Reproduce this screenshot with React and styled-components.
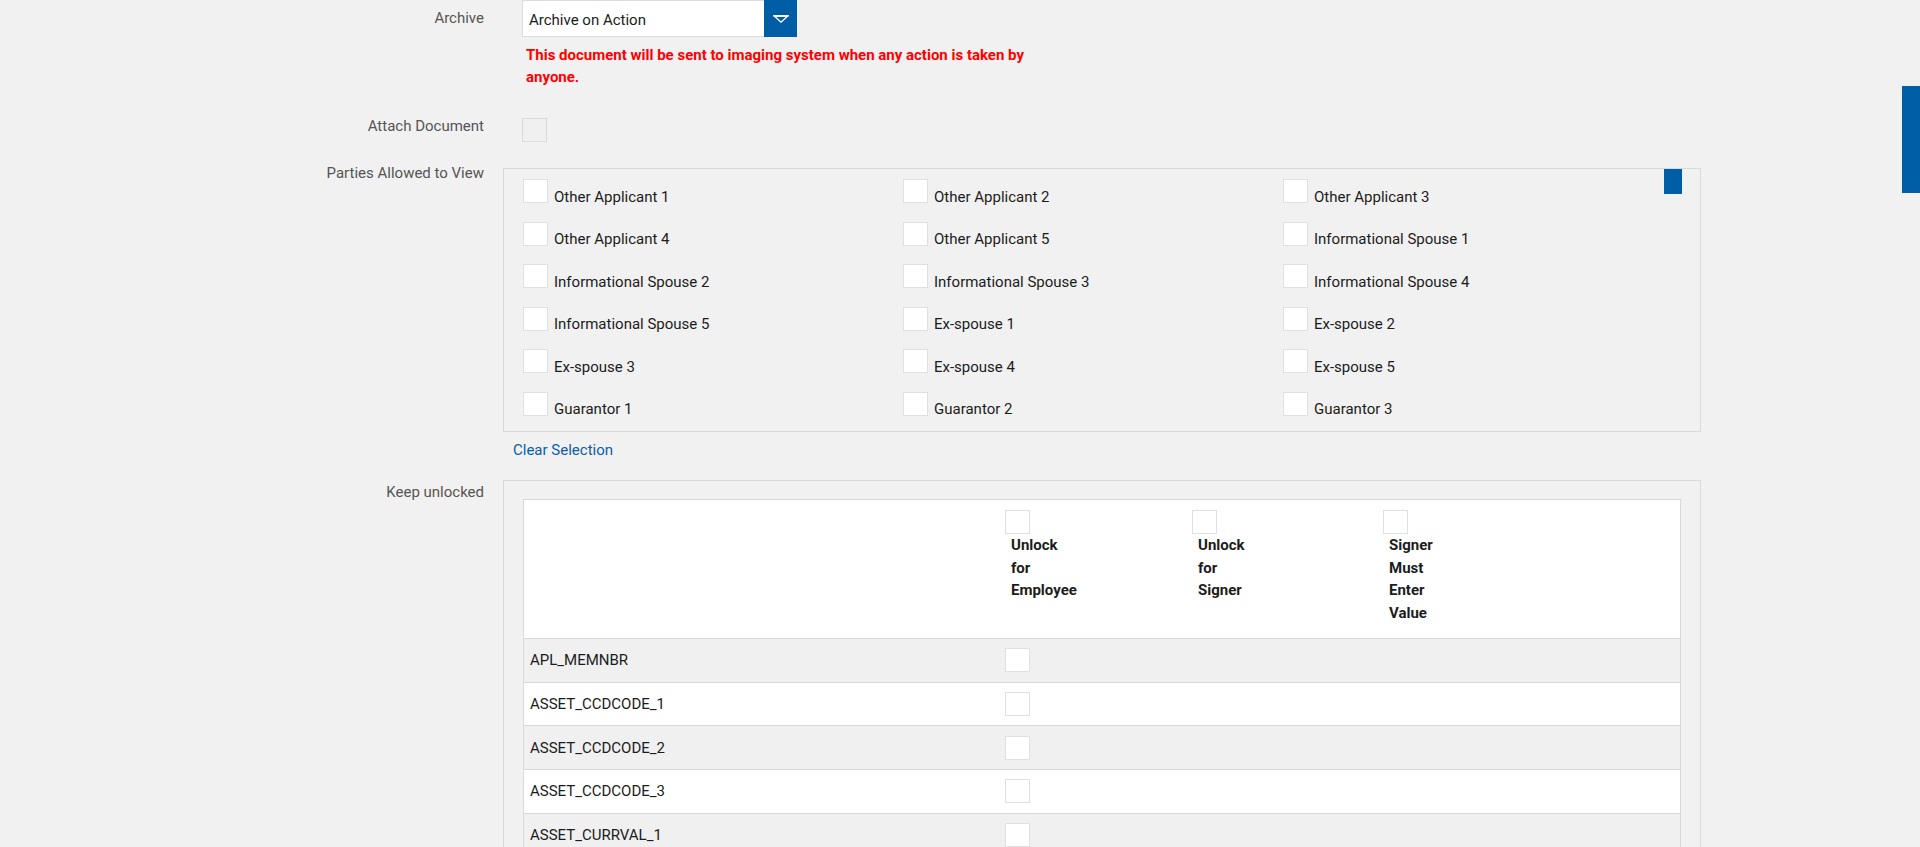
import styled, { createGlobalStyle } from 'styled-components'

const GlobalStyle = createGlobalStyle`
  html, body {
    margin: 0;
    padding: 0;
    overflow: hidden;
    background: #f1f1f1;
  }
  body {
    font-family: Roboto, "Noto Sans", "Liberation Sans", sans-serif;
    color: #222;
  }
  * {
    box-sizing: border-box;
  }
`

const Page = styled.div`
  position: relative;
  height: 847px;
  overflow: hidden;
`

const ScrollThumb = styled.div`
  position: absolute;
  top: ${p => p.$top}px;
  right: ${p => p.$right}px;
  width: 18px;
  height: ${p => p.$height}px;
  background: #005ea6;
`

const Form = styled.div`
  display: flex;
  flex-direction: column;
`

const FormRow = styled.div`
  display: grid;
  grid-template-columns: 484px 1198px;
  column-gap: 19px;
  align-items: start;
  margin-top: ${p => p.$top || 0}px;
`

const Label = styled.label`
  grid-column: 1;
  text-align: right;
  font-size: 15px;
  line-height: 18px;
  color: #555;
  margin-top: ${p => p.$offset || 0}px;
`

const Control = styled.div`
  grid-column: 2;
  display: flex;
  flex-direction: column;
  align-items: flex-start;
`

const Select = styled.div`
  display: flex;
  width: 275px;
  height: 37px;
  margin-left: 19px;
`

const SelectField = styled.div`
  flex: 1;
  background: #fff;
  border: 1px solid #dcdcdc;
  border-right: 0;
  font-size: 15px;
  line-height: 35px;
  padding: 2px 0 0 6px;
  color: #1c1c1c;
`

const ArrowButton = styled.div`
  width: 33px;
  background: #005ea6;
  display: flex;
  align-items: center;
  justify-content: center;
`

const Notice = styled.p`
  margin: 7px 0 0 23px;
  width: 520px;
  color: #ff0000;
  font-weight: 700;
  font-size: 15px;
  line-height: 22px;
`

const Check = styled.span`
  display: block;
  flex: none;
  width: 25px;
  height: 24px;
  background: ${p => (p.$disabled ? '#f0f0f0' : '#fff')};
  border: 1px solid ${p => (p.$disabled ? '#dadada' : '#e0e0e0')};
  margin-left: ${p => p.$left || 0}px;
`

const Box = styled.div`
  position: relative;
  width: 100%;
  border: 1px solid #d9d9d9;
  padding: ${p => p.$pad};
  margin-top: ${p => p.$top || 0}px;
`

const PartyGrid = styled.div`
  display: grid;
  grid-template-columns: repeat(3, 380px);
  grid-auto-rows: 24px;
  row-gap: 18.5px;
`

const Party = styled.div`
  display: flex;
  align-items: flex-start;
  gap: 6px;
`

const PartyName = styled.span`
  font-size: 15px;
  line-height: 18px;
  padding-top: 8.5px;
  white-space: nowrap;
  color: #1c1c1c;
`

const ClearLink = styled.a`
  margin-left: 10px;
  font-size: 15px;
  line-height: 18px;
  color: #0b5ea8;
  text-decoration: none;
  cursor: pointer;
`

const Table = styled.div`
  border: 1px solid #d9d9d9;
  background: #fff;
`

const TableRow = styled.div`
  display: grid;
  grid-template-columns: 475px 187px 191px 1fr;
  align-items: ${p => (p.$head ? 'start' : 'center')};
  height: ${p => (p.$head ? 'auto' : '43.67px')};
  background: ${p => (p.$shade ? '#f0f0f0' : '#fff')};
  border-top: ${p => (p.$head ? '0' : '1px solid #d9d9d9')};
`

const HeadCell = styled.div`
  padding: 10px 6px 14px;
  display: flex;
  flex-direction: column;
  align-items: flex-start;
`

const HeadText = styled.span`
  width: min-content;
  margin-left: 6px;
  font-size: 15px;
  font-weight: 700;
  line-height: 22.5px;
  color: #1c1c1c;
`

const Cell = styled.div`
  padding: 0 6px;
  font-size: 15px;
  line-height: 18px;
  color: #1c1c1c;
`

const parties = [
  'Other Applicant 1', 'Other Applicant 2', 'Other Applicant 3',
  'Other Applicant 4', 'Other Applicant 5', 'Informational Spouse 1',
  'Informational Spouse 2', 'Informational Spouse 3', 'Informational Spouse 4',
  'Informational Spouse 5', 'Ex-spouse 1', 'Ex-spouse 2',
  'Ex-spouse 3', 'Ex-spouse 4', 'Ex-spouse 5',
  'Guarantor 1', 'Guarantor 2', 'Guarantor 3',
]

const fields = [
  'APL_MEMNBR',
  'ASSET_CCDCODE_1',
  'ASSET_CCDCODE_2',
  'ASSET_CCDCODE_3',
  'ASSET_CURRVAL_1',
]

const headers = ['Unlock for Employee', 'Unlock for Signer', 'Signer Must Enter Value']

function DownArrow() {
  return (
    <svg width="16" height="8" viewBox="0 0 16 8">
      <rect x="0.5" y="0" width="15" height="1.8" fill="#fff" />
      <path d="M1.2 1 H14.8 L8 7.2 Z" fill="none" stroke="#fff" strokeWidth="1.3" />
    </svg>
  )
}

export default function App() {
  return (
    <Page>
      <GlobalStyle />
      <Form>
        <FormRow>
          <Label $offset={9}>Archive</Label>
          <Control>
            <Select>
              <SelectField>Archive on Action</SelectField>
              <ArrowButton><DownArrow /></ArrowButton>
            </Select>
            <Notice>
              This document will be sent to imaging system when any action is taken by anyone.
            </Notice>
          </Control>
        </FormRow>

        <FormRow $top={30}>
          <Label $offset={-1.5}>Attach Document</Label>
          <Control>
            <Check $disabled $left={19} />
          </Control>
        </FormRow>

        <FormRow $top={26}>
          <Label $offset={-4}>Parties Allowed to View</Label>
          <Control>
            <Box $pad="10px 19px 15.5px">
              <PartyGrid>
                {parties.map(name => (
                  <Party key={name}>
                    <Check />
                    <PartyName>{name}</PartyName>
                  </Party>
                ))}
              </PartyGrid>
              <ScrollThumb $top={0} $right={18} $height={25} />
            </Box>
          </Control>
        </FormRow>

        <FormRow $top={9}>
          <Control>
            <ClearLink>Clear Selection</ClearLink>
          </Control>
        </FormRow>

        <FormRow $top={21}>
          <Label $offset={3}>Keep unlocked</Label>
          <Control>
            <Box $pad="18px 19px 20px">
              <Table>
                <TableRow $head>
                  <HeadCell />
                  {headers.map(h => (
                    <HeadCell key={h}>
                      <Check />
                      <HeadText>{h}</HeadText>
                    </HeadCell>
                  ))}
                </TableRow>
                {fields.map((f, i) => (
                  <TableRow key={f} $shade={i % 2 === 0}>
                    <Cell>{f}</Cell>
                    <Cell><Check /></Cell>
                    <Cell />
                    <Cell />
                  </TableRow>
                ))}
              </Table>
            </Box>
          </Control>
        </FormRow>
      </Form>
      <ScrollThumb $top={86} $right={0} $height={107} />
    </Page>
  )
}
